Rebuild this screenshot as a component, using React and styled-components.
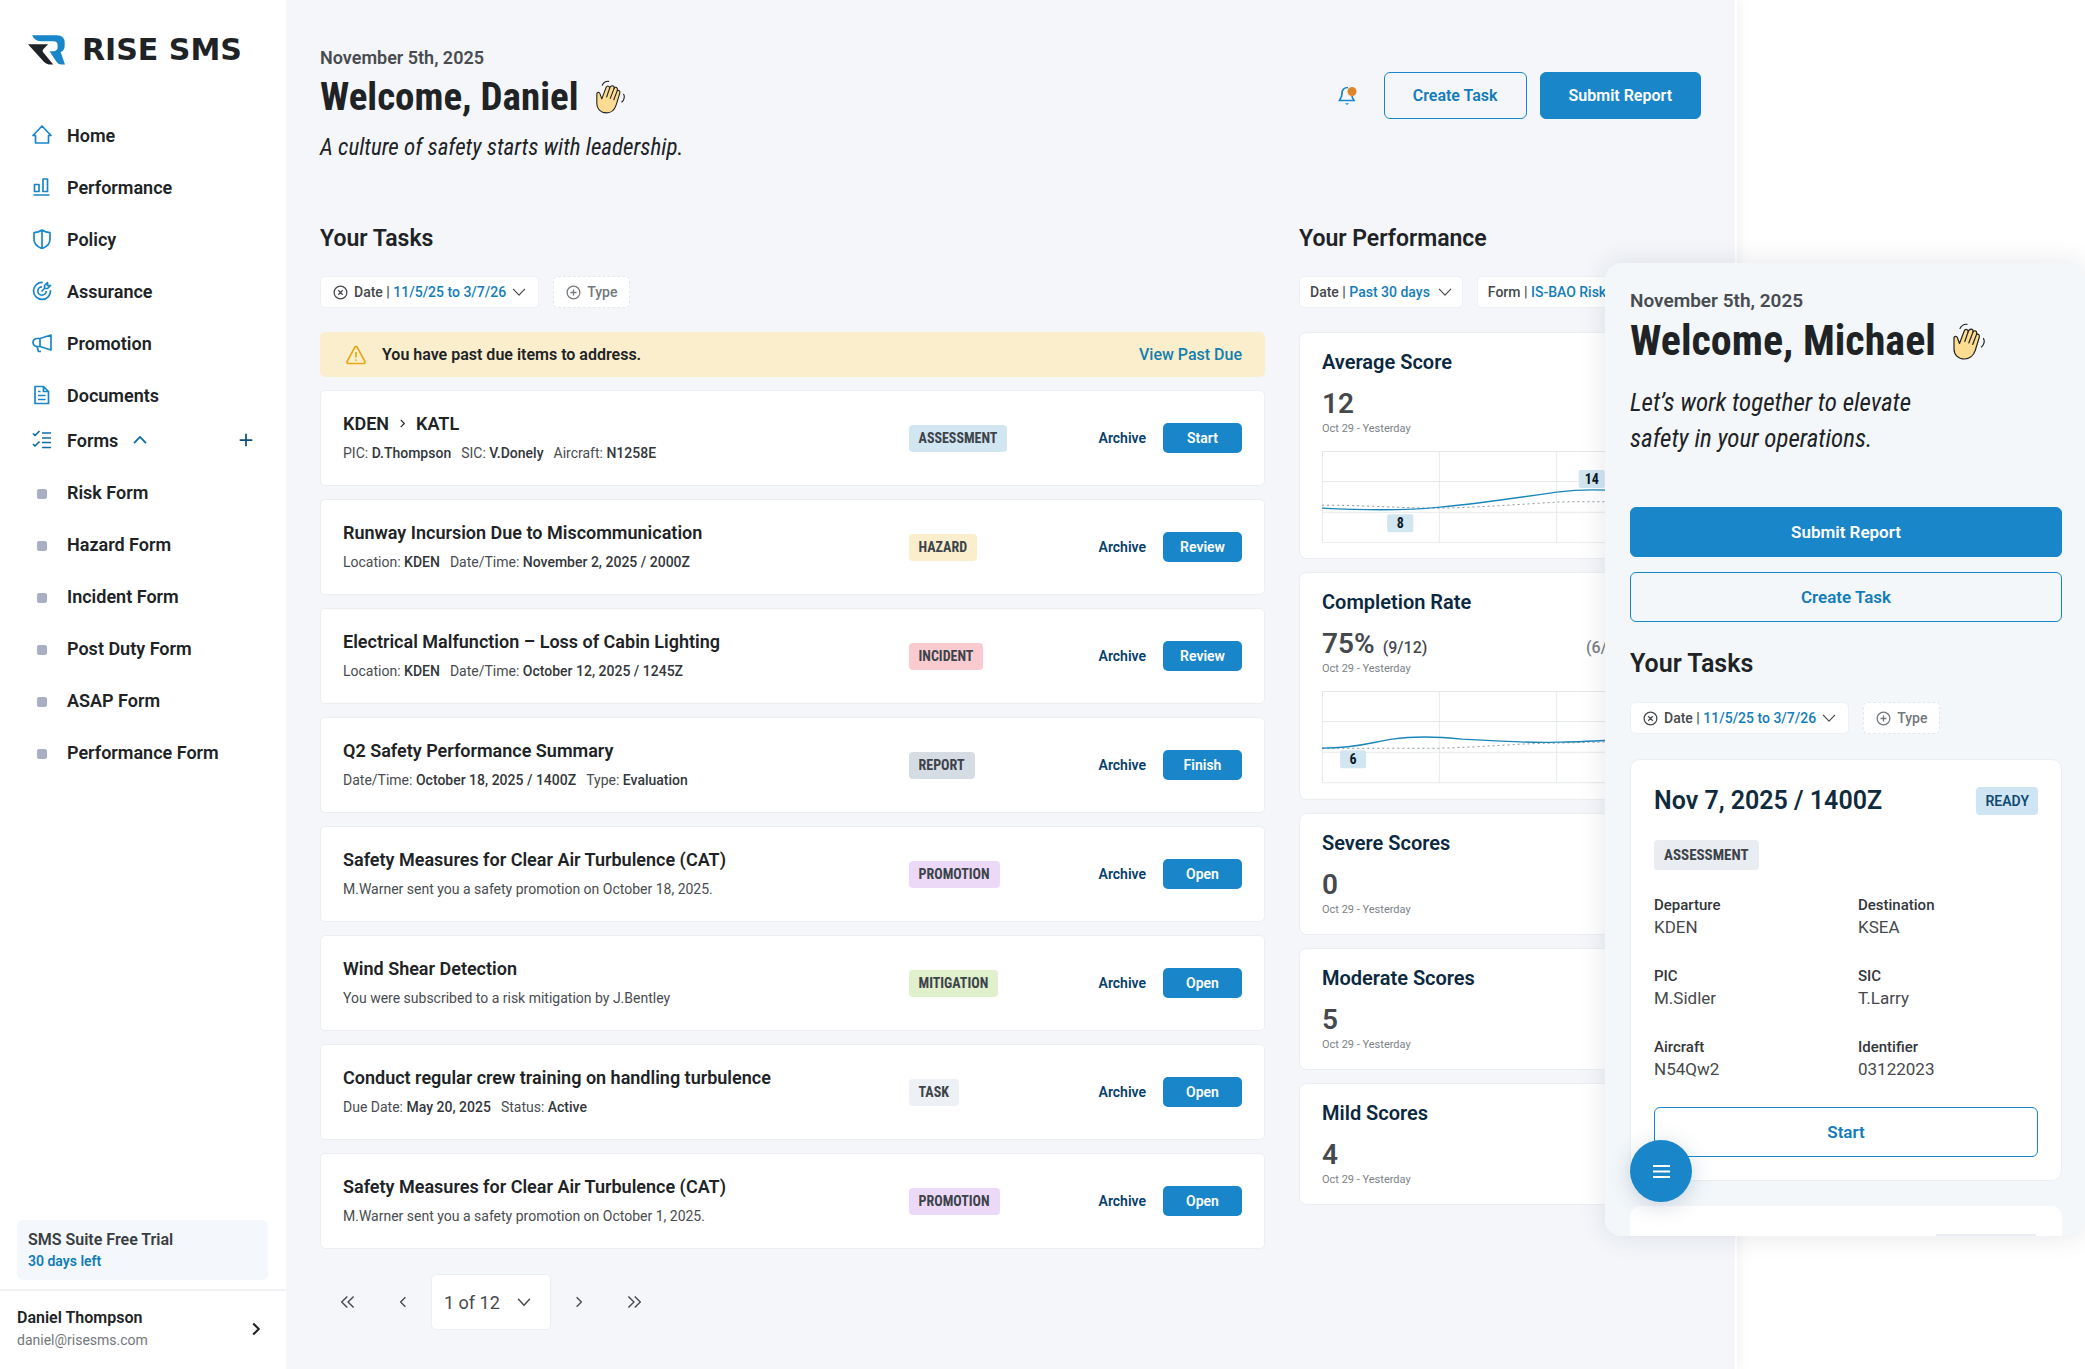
import React, { useState } from "react";
import styled, { createGlobalStyle } from "styled-components";

const navItems = [
    { label: 'Home', icon: 'home' },
    { label: 'Performance', icon: 'bars' },
    { label: 'Policy', icon: 'shield' },
    { label: 'Assurance', icon: 'target' },
    { label: 'Promotion', icon: 'horn' },
    { label: 'Documents', icon: 'file' },
];

const formItems = ['Risk Form', 'Hazard Form', 'Incident Form', 'Post Duty Form', 'ASAP Form', 'Performance Form'];

const tasks = [
    { title: 'KDEN', to: 'KATL', meta: [['PIC:', 'D.Thompson'], ['SIC:', 'V.Donely'], ['Aircraft:', 'N1258E']], tag: 'Assessment', action: 'Start' },
    { title: 'Runway Incursion Due to Miscommunication', meta: [['Location:', 'KDEN'], ['Date/Time:', 'November 2, 2025 / 2000Z']], tag: 'Hazard', action: 'Review' },
    { title: 'Electrical Malfunction – Loss of Cabin Lighting', meta: [['Location:', 'KDEN'], ['Date/Time:', 'October 12, 2025 / 1245Z']], tag: 'Incident', action: 'Review' },
    { title: 'Q2 Safety Performance Summary', meta: [['Date/Time:', 'October 18, 2025 / 1400Z'], ['Type:', 'Evaluation']], tag: 'Report', action: 'Finish' },
    { title: 'Safety Measures for Clear Air Turbulence (CAT)', meta: [['M.Warner sent you a safety promotion on October 18, 2025.']], tag: 'Promotion', action: 'Open' },
    { title: 'Wind Shear Detection', meta: [['You were subscribed to a risk mitigation by J.Bentley']], tag: 'Mitigation', action: 'Open' },
    { title: 'Conduct regular crew training on handling turbulence', meta: [['Due Date:', 'May 20, 2025'], ['Status:', 'Active']], tag: 'Task', action: 'Open' },
    { title: 'Safety Measures for Clear Air Turbulence (CAT)', meta: [['M.Warner sent you a safety promotion on October 1, 2025.']], tag: 'Promotion', action: 'Open' },
];

const tagColors = {
    Assessment: '#d2e6f2',
    Hazard: '#faeecd',
    Incident: '#f9cbd0',
    Report: '#d6dce4',
    Promotion: '#ecd9f8',
    Mitigation: '#e0efcc',
    Task: '#edf0f4',
};

const scores = [
    {
        title: 'Average Score',
        value: '12',
        chart: {
            line: 'M0 57 C40 59 80 60 118 56 C160 52 200 46 234 41 C250 39 275 38 300 40 C320 42 340 44 355 44',
            average: 'M0 54 C40 54 80 57 118 57 C160 56 200 53 234 51 C270 50 320 51 355 52',
            points: [{ x: 65, y: 63, value: 8 }, { x: 256, y: 19, value: 14 }],
        },
    },
    {
        title: 'Completion Rate',
        value: '75%',
        detail: '(9/12)',
        previous: '(6/12)',
        chart: {
            line: 'M0 57 C35 57 50 51 70 48 C90 45 112 45 140 48 C175 50 205 52 234 51 C260 51 300 48 355 46',
            average: 'M0 57 C50 57 90 57 118 57 C160 56 200 52 234 52 C270 51 320 50 355 50',
            points: [{ x: 18, y: 59, value: 6 }],
        },
    },
    { title: 'Severe Scores', value: '0' },
    { title: 'Moderate Scores', value: '5' },
    { title: 'Mild Scores', value: '4' },
];

const flight = [
    ['Departure', 'KDEN'],
    ['Destination', 'KSEA'],
    ['PIC', 'M.Sidler'],
    ['SIC', 'T.Larry'],
    ['Aircraft', 'N54Qw2'],
    ['Identifier', '03122023'],
];

const iconPaths = {
    home: 'M3.5 10.5H1L10 1l9 9.5h-2.5v7.5h-13z',
    bars: 'M2.5 7.5h4.500v7h-4.500zM11 2h4.500v12.500h-4.500zM1.5 18h16',
    shield: 'M10 1c2.500 1.700 5 2.500 8 2.700V10c0 5-3.500 8-8 9.500C5.500 18 2 15 2 10V3.700C5 3.500 7.500 2.700 10 1zM10 1v18.500',
    target: 'M10 5.800a4.200 4.200 0 1 0 4.200 4.200M10.800 1.500a8.500 8.500 0 1 0 7.700 7.700M12.500 4.500v3h3l3-3h-3v-3zM12.500 7.500L9.500 10.500',
    horn: 'M19 2v15L8 13.500H5a4 4 0 0 1 0-8h3zM8 5.500v8M5 13.500l1.500 5h2.500',
    file: 'M3 1.500h8.500l5 5V18.500H3zM11.500 1.500v5h5M6 6.500h2.500M6 10.500h7.500M6 14.500h7.500',
    list: 'M1 3.500l2 2L7.500 1M1 14l2 2 4.500-4.500M10 3h9M10 8h9M10 12.500h9M10 17.500h9',
    warning: 'M10 1.500c.6 0 1 .3 1.300.800l7.500 14c.5 1-.1 2.200-1.200 2.200H2.400c-1.100 0-1.700-1.200-1.200-2.200l7.500-14c.3-.5.7-.8 1.300-.8zM10 7v5.500M10 14.500v1.200',
    remove: 'M10 1.500a8.500 8.500 0 1 0 0 17 8.500 8.500 0 0 0 0-17zM7 7l6 6M13 7l-6 6',
    add: 'M10 1.500a8.500 8.500 0 1 0 0 17 8.500 8.500 0 0 0 0-17zM10 6v8M6 10h8',
    plus: 'M10 1v18M1 10h18',
    down: 'M1.500 5.500l8.500 9 8.500-9',
    up: 'M1.500 14.500l8.500-9 8.500 9',
    right: 'M6 2l8 8-8 8',
    left: 'M14 2l-8 8 8 8',
    first: 'M9 2l-8 8 8 8M18 2l-8 8 8 8',
    last: 'M2 2l8 8-8 8M11 2l8 8-8 8',
    menu: 'M0 3.500h20M0 10h20M0 16.500h20',
};

function Icon({ name, size = 20, weight = 1.7 }) {
    return (
        <svg width={size} height={size} viewBox="0 0 20 20" fill="none" stroke="currentColor"
            strokeWidth={weight} strokeLinejoin="round" aria-hidden="true">
            <path d={iconPaths[name]} />
        </svg>
    );
}

function LogoMark() {
    return (
        <svg width="37" height="30" viewBox="0 0 110 88" aria-hidden="true">
            <path fill="#1986c9" d="M12 0H86Q109 1 109 22V32Q109 46 97 50L110 87H98Q89 86 84 78L64 48H74Q88 47 88 36V30Q88 18 76 18H36Q20 17 12 0Z" />
            <path fill="#202326" d="M0 27H60L46 41Q41 46 45 51L75 87H62Q53 86 47 79Z" />
        </svg>
    );
}

function WavingHand({ size = 37 }) {
    return (
        <svg width={size - 4} height={size} viewBox="0 0 33 37" fill="none" stroke="#222" strokeWidth="1.200" strokeLinecap="round" strokeLinejoin="round" aria-hidden="true">
            <path fill="#fcdc90" d="M2 16C1.500 13 5 12.500 5.500 15L7.500 20.500 12.200 8C13.200 5.500 16.800 6.300 16 9.200 17 5 21.800 5.300 21 9 22.500 6.500 25.600 8 24.500 11.500 26.200 10.500 28 12 27.200 14.500L23.200 27.500C21.500 33 17 36 12.500 36 6 36 2 31.500 2 26Z" />
            <path d="M16 9.200L12.800 18.500M21 9L16.800 20M24.500 11.500L20.700 21.500M8 5.500C9.500 2.500 12 1 15 1.300M31.500 15.500C33 18 32 22 29.500 24" />
        </svg>
    );
}

function BellIcon() {
    return (
        <svg width="20" height="20" viewBox="0 0 20 20" fill="none" stroke="#1986c9" strokeWidth="1.700" aria-hidden="true">
            <path d="M10 1.500C6 1.500 4 4 4 7.500 4 11 2.500 12.500 1.500 14.500H16C15 13 14.200 12 14 10" />
            <path d="M7 17.300h4l-2 1.700z" fill="#1986c9" stroke="none" />
            <circle cx="14" cy="5.500" r="4.500" fill="#e0862a" stroke="none" />
        </svg>
    );
}

function Chart({ chart, label }) {
    return (
        <ChartSvg viewBox="0 0 355 92" role="img" aria-label={label}>
            <path stroke="#e6e9ec" d="M.5 .5H354.500V91.500H.5ZM0 30.500H355M0 61H355M117 0V92M234 0V92M350 0V92" />
            <path stroke="#8d979e" strokeDasharray="2 3" d={chart.average} />
            <path stroke="#1986b9" strokeWidth="1.400" d={chart.line} />
            {chart.points.map(p => (
                <g key={p.value}>
                    <rect x={p.x} y={p.y} width="26" height="18" rx="2" fill="#d2e6f2" />
                    <text x={p.x + 13} y={p.y + 14} textAnchor="middle">{p.value}</text>
                </g>
            ))}
        </ChartSvg>
    );
}

function TaskFilters() {
    return (
        <Filters>
            <Chip type="button" $icon><Icon name="remove" size={15} /><span>Date | <b>11/5/25 to 3/7/26</b></span><Icon name="down" size={14} /></Chip>
            <Chip type="button" $icon $dashed><Icon name="add" size={15} />Type</Chip>
        </Filters>
    );
}

function Sidebar() {
    const [open, setOpen] = useState(true);

    return (
        <Side>
            <Logo href="#"><LogoMark />RISE SMS</Logo>
            <Nav>
                {navItems.map(item => (
                    <NavLink href="#" key={item.label}><Icon name={item.icon} />{item.label}</NavLink>
                ))}
            </Nav>
            <FormsNav>
                <FormsHead>
                    <FormsToggle type="button" aria-expanded={open} onClick={() => setOpen(!open)}>
                        <Icon name="list" />Forms<Icon name={open ? 'up' : 'down'} size={14} weight={2.5} />
                    </FormsToggle>
                    <IconButton type="button" aria-label="Add form"><Icon name="plus" size={14} weight={2.5} /></IconButton>
                </FormsHead>
                {open && formItems.map(item => (
                    <NavLink href="#" key={item}><Bullet />{item}</NavLink>
                ))}
            </FormsNav>
            <Trial>
                <strong>SMS Suite Free Trial</strong>
                <a href="#">30 days left</a>
            </Trial>
            <Profile href="#">
                <div>
                    <strong>Daniel Thompson</strong>
                    <span>daniel@risesms.com</span>
                </div>
                <Icon name="right" size={14} weight={3} />
            </Profile>
        </Side>
    );
}

function TaskCard({ task }) {
    return (
        <Card>
            <div>
                <TaskTitle>{task.title}{task.to && <><Icon name="right" size={9} weight={2.5} />{task.to}</>}</TaskTitle>
                <Meta>
                    {task.meta.map(([name, value]) => (
                        <span key={name}>{name}{value && <> <b>{value}</b></>}</span>
                    ))}
                </Meta>
            </div>
            <TagCell><Tag $bg={tagColors[task.tag]}>{task.tag}</Tag></TagCell>
            <ArchiveButton type="button">Archive</ArchiveButton>
            <ActionButton type="button">{task.action}</ActionButton>
        </Card>
    );
}

function Pagination() {
    return (
        <Pager aria-label="Pages">
            <IconButton type="button" aria-label="First page"><Icon name="first" size={14} weight={2} /></IconButton>
            <IconButton type="button" aria-label="Previous page"><Icon name="left" size={12} weight={2.2} /></IconButton>
            <PageSelect>
                <select aria-label="Page" defaultValue="1">
                    {Array.from({ length: 12 }, (_, i) => (
                        <option key={i} value={i + 1}>{i + 1} of 12</option>
                    ))}
                </select>
                <Icon name="down" size={14} weight={2} />
            </PageSelect>
            <IconButton type="button" aria-label="Next page"><Icon name="right" size={12} weight={2.2} /></IconButton>
            <IconButton type="button" aria-label="Last page"><Icon name="last" size={14} weight={2} /></IconButton>
        </Pager>
    );
}

function ScoreCard({ score }) {
    return (
        <Score>
            <h3>{score.title}</h3>
            <ScoreValue>
                <strong>{score.value}</strong>
                {score.detail && <span>{score.detail}</span>}
                {score.previous && <Previous>{score.previous}</Previous>}
            </ScoreValue>
            <Period>Oct 29 - Yesterday</Period>
            {score.chart && <Chart chart={score.chart} label={score.title} />}
        </Score>
    );
}

function MobileView() {
    return (
        <Phone>
            <DateLine $large>November 5th, 2025</DateLine>
            <Welcome $large>Welcome, Michael <WavingHand /></Welcome>
            <PhoneQuote>Let’s work together to elevate safety in your operations.</PhoneQuote>
            <PhoneActions>
                <Button type="button" $primary $large>Submit Report</Button>
                <Button type="button" $large>Create Task</Button>
            </PhoneActions>
            <SectionTitle $large>Your Tasks</SectionTitle>
            <TaskFilters />
            <FlightCard>
                <FlightHead>
                    <h3>Nov 7, 2025 / 1400Z</h3>
                    <Ready>READY</Ready>
                </FlightHead>
                <Tag $bg="#e9ecf1" $large>Assessment</Tag>
                <Fields>
                    {flight.map(([name, value]) => (
                        <div key={name}>
                            <dt>{name}</dt>
                            <dd>{value}</dd>
                        </div>
                    ))}
                </Fields>
                <Button type="button" $large>Start</Button>
            </FlightCard>
            <NextCard />
            <MenuButton type="button" aria-label="Menu"><Icon name="menu" size={17} weight={2.5} /></MenuButton>
        </Phone>
    );
}

function App() {
    return (
        <Page>
            <GlobalStyle />
            <Dashboard>
                <Sidebar />
                <Main>
                    <Header>
                        <div>
                            <DateLine>November 5th, 2025</DateLine>
                            <Welcome>Welcome, Daniel <WavingHand size={34} /></Welcome>
                            <Quote>A culture of safety starts with leadership.</Quote>
                        </div>
                        <HeaderActions>
                            <BellButton type="button" aria-label="Notifications"><BellIcon /></BellButton>
                            <Button type="button">Create Task</Button>
                            <Button type="button" $primary>Submit Report</Button>
                        </HeaderActions>
                    </Header>
                    <Columns>
                        <section>
                            <SectionTitle>Your Tasks</SectionTitle>
                            <TaskFilters />
                            <Stack>
                                <Banner>
                                    <Icon name="warning" />
                                    <span>You have past due items to address.</span>
                                    <a href="#">View Past Due</a>
                                </Banner>
                                {tasks.map((task, i) => <TaskCard key={i} task={task} />)}
                            </Stack>
                            <Pagination />
                        </section>
                        <section>
                            <SectionTitle>Your Performance</SectionTitle>
                            <Filters>
                                <Chip type="button"><span>Date | <b>Past 30 days</b></span><Icon name="down" size={14} /></Chip>
                                <Chip type="button"><span>Form | <b>IS-BAO Risk</b></span><Icon name="down" size={14} /></Chip>
                            </Filters>
                            <Stack>
                                {scores.map(score => <ScoreCard key={score.title} score={score} />)}
                            </Stack>
                        </section>
                    </Columns>
                </Main>
            </Dashboard>
            <MobileView />
        </Page>
    );
}

const condensed = `'Roboto Condensed', 'Liberation Sans Narrow', Roboto, sans-serif`;

const GlobalStyle = createGlobalStyle`
    *{
        box-sizing: border-box;
        margin: 0;
        padding: 0;
    }
    body{
        background: #fff;
        color: #202326;
        font-family: Roboto, sans-serif;
        font-size: 14px;
        overflow-x: hidden;
    }
    button, select{
        font: inherit;
        color: inherit;
        border: none;
        background: none;
        cursor: pointer;
    }
    a{
        color: inherit;
        text-decoration: none;
    }
    h1, h2, h3, b, strong{
        font-weight: 600;
    }
    svg{
        flex-shrink: 0;
    }
`;

const Page = styled.div`
    position: relative;
    min-height: 100vh;
`;

const Dashboard = styled.div`
    display: flex;
    min-height: 100vh;
    margin-right: 348px;
    background: #f4f6fa;
    border-right: 2px solid #fff;
    box-shadow: 0 0 14px rgba(0, 0, 0, 0.08);
`;

const Side = styled.aside`
    display: flex;
    flex-direction: column;
    flex: 0 0 286px;
    background: #fff;
`;

const Logo = styled.a`
    display: flex;
    align-items: center;
    gap: 17px;
    padding: 33px 0 0 28px;
    font-family: 'DejaVu Sans', sans-serif;
    font-size: 30px;
    font-weight: 700;
    line-height: 34px;
    white-space: nowrap;
`;

const Nav = styled.nav`
    padding-top: 42px;
`;

const NavLink = styled.a`
    display: flex;
    align-items: center;
    gap: 15px;
    height: 52px;
    padding: 0 32px;
    font-size: 18px;
    font-weight: 600;
    svg{
        color: #1986c9;
    }
`;

const FormsNav = styled.div`
    margin-top: -7px;
`;

const FormsHead = styled.div`
    display: flex;
    align-items: center;
    justify-content: space-between;
    padding: 0 26px 0 32px;
    color: #0d4f7c;
`;

const FormsToggle = styled.button`
    display: flex;
    align-items: center;
    gap: 15px;
    height: 52px;
    font-size: 18px;
    font-weight: 600;
    color: #202326;
    svg{
        color: #0f6ea6;
    }
`;

const IconButton = styled.button`
    display: flex;
    align-items: center;
    justify-content: center;
    padding: 0 7px;
`;

const BellButton = styled(IconButton)`
    padding: 0 13px;
`;

const Bullet = styled.span`
    width: 10px;
    height: 10px;
    margin: 3px 5px 0;
    border-radius: 2px;
    background: #a9b0c6;
`;

const Trial = styled.div`
    display: flex;
    flex-direction: column;
    margin: auto 18px 9px 17px;
    padding: 9px 11px;
    border-radius: 6px;
    background: #f4f7fb;
    color: #3a3e42;
    strong{
        font-size: 16px;
        line-height: 22px;
    }
    a{
        font-weight: 600;
        line-height: 20px;
        color: #0f7db8;
    }
`;

const Profile = styled.a`
    display: flex;
    align-items: center;
    justify-content: space-between;
    height: 80px;
    padding: 0 23px 2px 17px;
    border-top: 2px solid #f0f2f5;
    strong, span{
        display: block;
        line-height: 22px;
    }
    strong{
        font-size: 16px;
    }
    span{
        color: #73787d;
    }
`;

const Main = styled.main`
    flex: 1;
    min-width: 0;
    padding: 46px 34px 38px;
`;

const Header = styled.header`
    display: flex;
    align-items: flex-start;
    justify-content: space-between;
`;

const DateLine = styled.p`
    font-size: ${({ $large }) => $large ? 19 : 18}px;
    font-weight: 600;
    line-height: 24px;
    color: #484c50;
`;

const Welcome = styled.h1`
    display: flex;
    align-items: center;
    gap: 16px;
    margin-top: ${({ $large }) => $large ? 4 : 3}px;
    font-family: ${condensed};
    font-size: ${({ $large }) => $large ? 42 : 39}px;
    font-weight: 700;
    line-height: 48px;
    white-space: nowrap;
`;

const Quote = styled.p`
    margin-top: 11px;
    font-family: ${condensed};
    font-size: 23px;
    font-style: italic;
    line-height: 32px;
`;

const HeaderActions = styled.div`
    display: flex;
    gap: 13px;
    margin-top: 26px;
`;

const Button = styled.button`
    height: ${({ $large }) => $large ? 50 : 47}px;
    padding: 0 28px;
    border: 1px solid #1986c9;
    border-radius: 6px;
    background: ${({ $primary }) => $primary ? '#1986c9' : 'transparent'};
    color: ${({ $primary }) => $primary ? '#fff' : '#147db9'};
    font-size: ${({ $large }) => $large ? 17 : 16}px;
    font-weight: 600;
`;

const Columns = styled.div`
    display: grid;
    grid-template-columns: minmax(0, 1fr) 402px;
    gap: 34px;
    margin-top: 59px;
`;

const SectionTitle = styled.h2`
    font-size: ${({ $large }) => $large ? 25 : 23}px;
    line-height: ${({ $large }) => $large ? 34 : 32}px;
`;

const Filters = styled.div`
    display: flex;
    gap: 14px;
    margin-top: 21px;
`;

const Chip = styled.button`
    display: flex;
    align-items: center;
    gap: ${({ $icon }) => $icon ? 6 : 8}px;
    height: 32px;
    padding: 0 ${({ $icon }) => $icon ? 12 : 10}px;
    border: ${({ $dashed }) => $dashed ? '1px dashed #e3e6ea' : '1px solid #edf0f4'};
    border-radius: 5px;
    background: #fff;
    font-weight: 500;
    white-space: nowrap;
    color: ${({ $dashed }) => $dashed ? '#73787d' : '#45494d'};
    b{
        font-weight: 500;
        color: #147db9;
    }
`;

const Stack = styled.div`
    display: flex;
    flex-direction: column;
    gap: 13px;
    margin-top: 24px;
`;

const Banner = styled.div`
    display: flex;
    align-items: center;
    gap: 16px;
    height: 45px;
    padding: 0 23px 0 26px;
    border-radius: 5px;
    background: #fbeecd;
    font-size: 16px;
    font-weight: 600;
    svg{
        color: #e6a817;
    }
    a{
        margin-left: auto;
        font-weight: 500;
        color: #147fae;
    }
`;

const Card = styled.article`
    display: grid;
    grid-template-columns: minmax(0, 1fr) 190px auto 79px;
    align-items: center;
    height: 96px;
    padding: 0 22px;
    border: 1px solid #eceff2;
    border-radius: 5px;
    background: #fff;
`;

const TaskTitle = styled.h3`
    display: flex;
    align-items: center;
    gap: 9px;
    font-size: 18px;
    line-height: 28px;
`;

const Meta = styled.p`
    display: flex;
    gap: 10px;
    margin: 3px 0 2px;
    line-height: 24px;
    color: #484c50;
    b{
        font-weight: 500;
        color: #33373b;
    }
`;

const TagCell = styled.div`
    display: flex;
`;

const Tag = styled.span`
    display: inline-block;
    padding: 0 10px;
    border-radius: 4px;
    background: ${({ $bg }) => $bg};
    color: #3c4349;
    font-family: ${condensed};
    font-size: ${({ $large }) => $large ? 15 : 14}px;
    font-weight: 700;
    line-height: ${({ $large }) => $large ? 30 : 27}px;
    text-transform: uppercase;
`;

const ArchiveButton = styled.button`
    margin-right: 17px;
    font-weight: 600;
    color: #07406b;
`;

const ActionButton = styled.button`
    height: 30px;
    border-radius: 5px;
    background: #1986c9;
    color: #fff;
    font-weight: 600;
`;

const Pager = styled.nav`
    display: flex;
    align-items: center;
    gap: 14px;
    margin-top: 25px;
    padding-left: 14px;
    color: #45494d;
    > button{
        width: 28px;
    }
    > button:first-child{
        margin-right: 13px;
    }
    > button:last-child{
        margin-left: 13px;
    }
`;

const PageSelect = styled.label`
    display: grid;
    grid-template-columns: 1fr 14px;
    align-items: center;
    width: 120px;
    height: 56px;
    padding: 0 19px 0 12px;
    border: 1px solid #eceff2;
    border-radius: 5px;
    background: #fff;
    select{
        appearance: none;
        font-size: 18px;
        outline: none;
    }
`;

const Score = styled.article`
    padding: 17px 22px 15px;
    border: 1px solid #eceff2;
    border-radius: 8px;
    background: #fff;
    h3{
        font-size: 20px;
        line-height: 24px;
        color: #0a2840;
    }
`;

const ScoreValue = styled.div`
    display: flex;
    align-items: baseline;
    gap: 8px;
    margin-top: 14px;
    color: #45494d;
    strong{
        font-size: 28px;
        line-height: 32px;
    }
    span{
        font-size: 16px;
        font-weight: 500;
    }
`;

const Previous = styled.span`
    width: 92px;
    margin-left: auto;
    color: #7c8287;
`;

const Period = styled.p`
    font-size: 11px;
    line-height: 18px;
    color: #7c8287;
`;

const ChartSvg = styled.svg`
    display: block;
    width: 100%;
    margin-top: 13px;
    fill: none;
    text{
        fill: #0c1a26;
        font-family: ${condensed};
        font-size: 14px;
        font-weight: 700;
    }
`;

const Phone = styled.section`
    position: absolute;
    top: 263px;
    right: 0;
    width: 480px;
    padding: 26px 23px 0 25px;
    border-radius: 16px;
    background: #f3f7fa;
    box-shadow: 0 0 28px rgba(30, 40, 60, 0.11);
    overflow: hidden;
`;

const PhoneQuote = styled(Quote)`
    max-width: 320px;
    margin-top: 20px;
    font-size: 25px;
    line-height: 36px;
`;

const PhoneActions = styled.div`
    display: grid;
    gap: 15px;
    margin: 50px 0 25px;
`;

const FlightCard = styled.article`
    margin-top: 25px;
    padding: 25px 23px 23px;
    border: 1px solid #eaeef2;
    border-radius: 10px;
    background: #fff;
    > button{
        width: 100%;
    }
`;

const FlightHead = styled.div`
    display: flex;
    align-items: center;
    justify-content: space-between;
    margin-bottom: 23px;
    h3{
        font-size: 25px;
        line-height: 32px;
        color: #0f2b3d;
    }
`;

const Ready = styled.span`
    padding: 0 9px;
    border-radius: 4px;
    background: #cfe5f3;
    color: #114a70;
    font-weight: 600;
    line-height: 28px;
`;

const Fields = styled.dl`
    display: grid;
    grid-template-columns: 204px 1fr;
    row-gap: 27px;
    margin: 25px 0 26px;
    dt{
        font-size: 15px;
        font-weight: 500;
        line-height: 20px;
        color: #33373b;
    }
    dd{
        font-size: 17px;
        line-height: 24px;
        color: #45494d;
    }
`;

/* the next task, cut off by the bottom of the screen */
const NextCard = styled.div`
    display: flex;
    align-items: flex-end;
    justify-content: flex-end;
    height: 30px;
    margin-top: 25px;
    padding-right: 26px;
    border-radius: 10px 10px 0 0;
    background: #fff;
    &::after{
        content: '';
        width: 100px;
        height: 2px;
        background: #e9ecf1;
    }
`;

const MenuButton = styled.button`
    position: absolute;
    left: 25px;
    bottom: 34px;
    display: flex;
    align-items: center;
    justify-content: center;
    width: 62px;
    height: 62px;
    border-radius: 50%;
    background: #1986c9;
    color: #fff;
    box-shadow: 0 4px 22px rgba(20, 60, 100, 0.2);
`;

export default App;
